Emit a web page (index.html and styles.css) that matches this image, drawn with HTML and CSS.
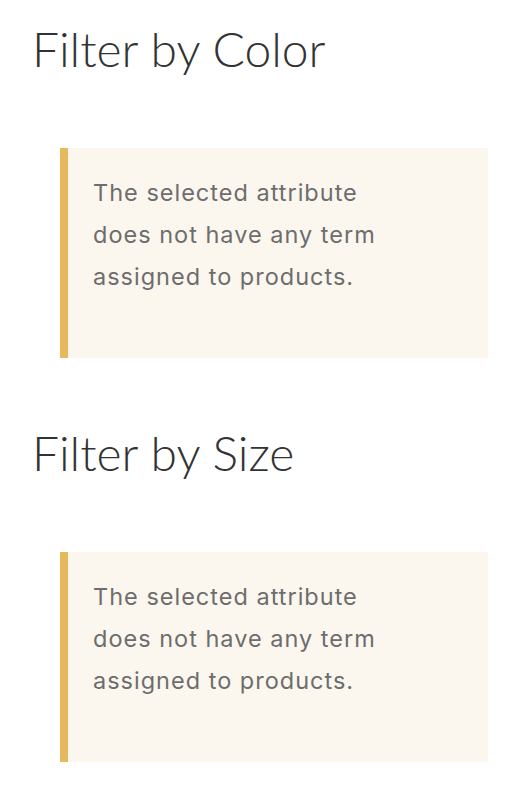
FILE: index.html
```html
<!DOCTYPE html>
<html lang="en">
<head>
<meta charset="utf-8">
<title>Filters</title>
<link rel="stylesheet" href="styles.css">
</head>
<body>
  <section class="widget">
    <h2 class="widget-title">Filter by Color</h2>
    <div class="notice">
      <p>The selected attribute does not have any term assigned to products.</p>
    </div>
  </section>
  <section class="widget">
    <h2 class="widget-title">Filter by Size</h2>
    <div class="notice">
      <p>The selected attribute does not have any term assigned to products.</p>
    </div>
  </section>
</body>
</html>
```

FILE: styles.css
```css
html, body {
  margin: 0;
  padding: 0;
  background: #ffffff;
}

body {
  padding: 19px 32px 0 32px;
}

.widget {
  display: flex;
  flex-direction: column;
  align-items: flex-start;
  margin-bottom: 65px;
}

.widget-title {
  margin: 0;
  font-family: Lato, "Open Sans", sans-serif;
  font-weight: 300;
  font-size: 48px;
  line-height: 60px;
  color: #333333;
}

.notice {
  box-sizing: border-box;
  margin: 69px 0 0 28px;
  width: 428px;
  height: 210px;
  background: #fbf7ef;
  border-left: 8px solid #e6b95c;
  padding: 24px 24px 0 25px;
}

.notice p {
  margin: 0;
  max-width: 320px;
  font-family: Inter, "Noto Sans", sans-serif;
  font-size: 23.5px;
  letter-spacing: 1px;
  line-height: 42px;
  color: #6d6d6d;
}
```
